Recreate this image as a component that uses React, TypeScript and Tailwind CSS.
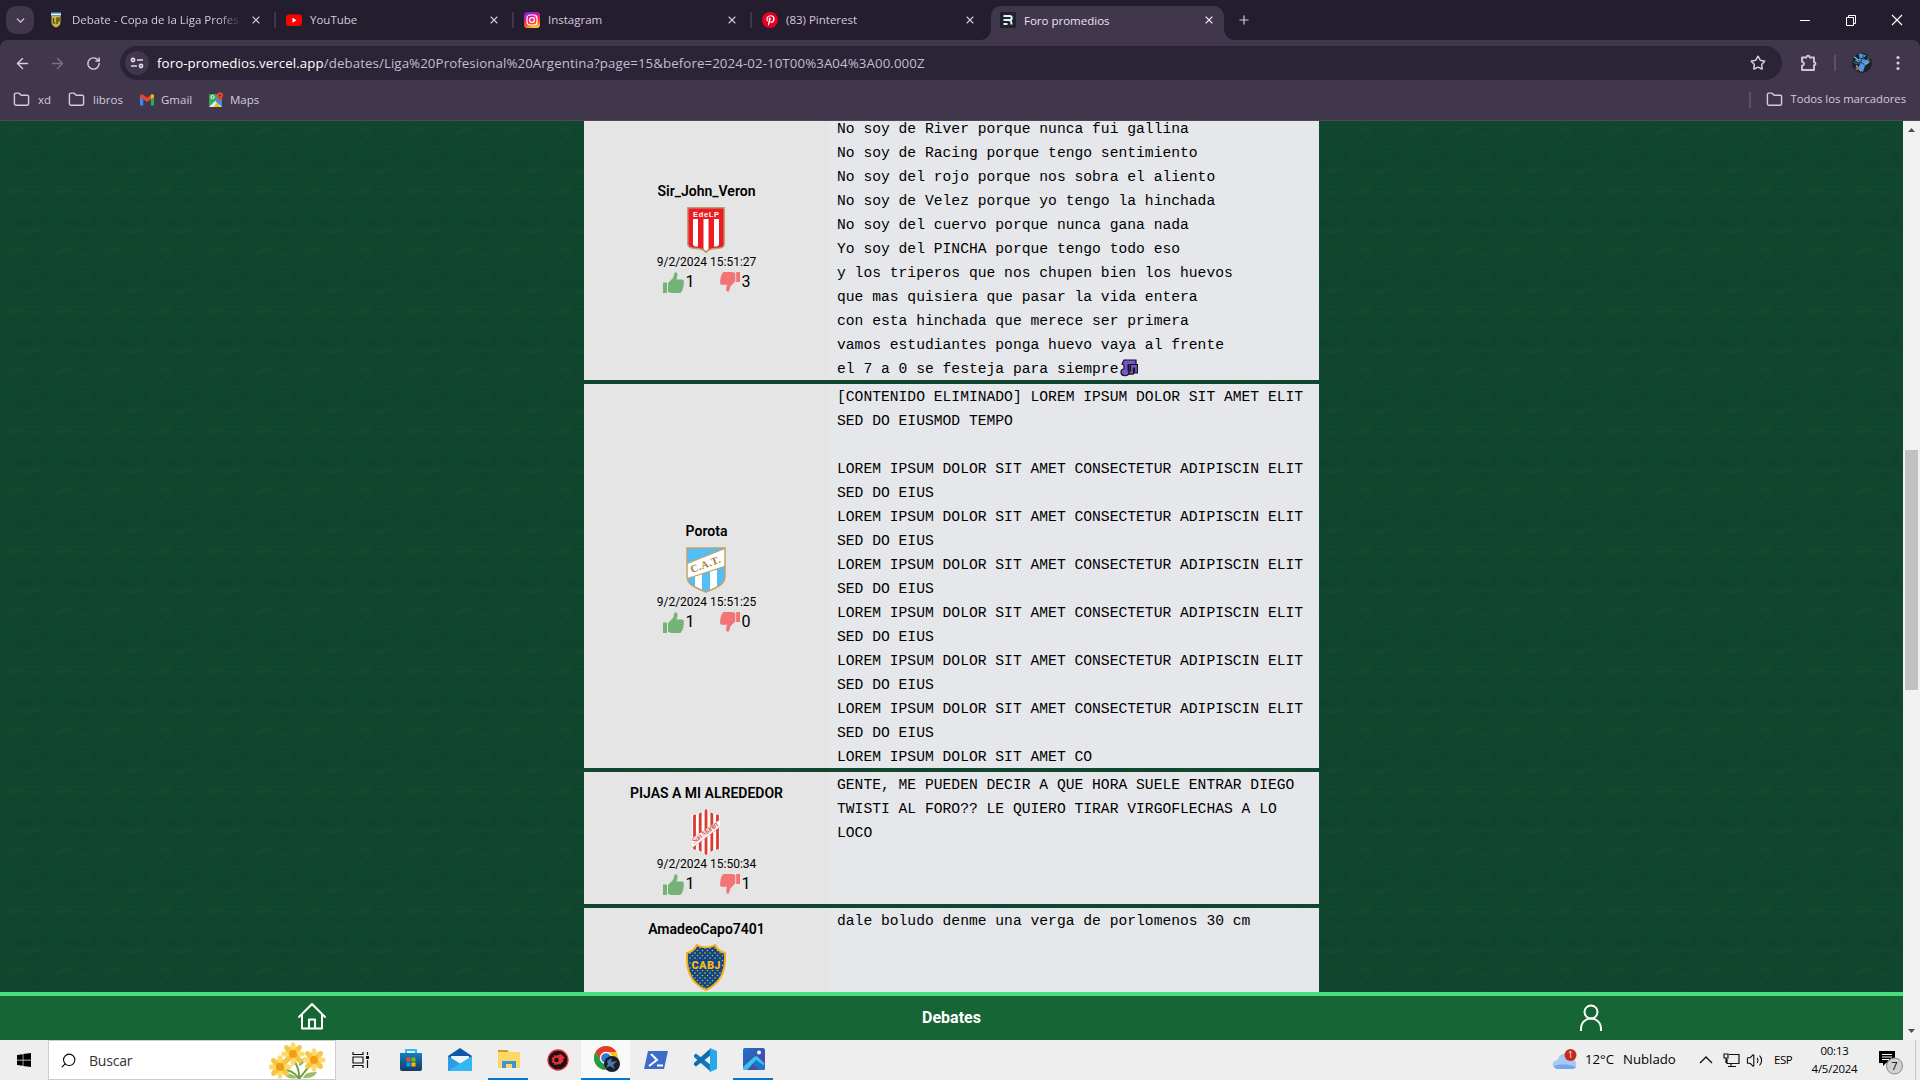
import React from "react";
import { ArrowLeft, ArrowRight, ChevronDown, Folder, Plus, RotateCw, Search, Star, X, Volume2 } from "lucide-react";
import { FaPinterestP, FaWindows } from "react-icons/fa";

type Kids = { children?: React.ReactNode };

function LeagueIcon() {
  return (
    <svg viewBox="0 0 16 16" className="size-4 shrink-0">
      <path d="M3.500 4h9v6.500c0 2.500-2 4-4.500 5-2.500-1-4.500-2.500-4.500-5z" fill="#d6b23c" />
      <path d="M3 .5h10v1.500H3z" fill="#46c3ea" />
      <path d="M3 2h10v1.500H3z" fill="#f4f8fa" />
      <path d="M5.500 6v5h2M9 12V6h2v3H9" stroke="#23483c" strokeWidth="1.200" fill="none" />
    </svg>
  );
}

function YoutubeIcon() {
  return (
    <svg viewBox="0 0 16 16" className="size-4 shrink-0">
      <rect y="2.500" width="16" height="11.500" rx="3" fill="#ff0000" />
      <path d="M6.500 5.800v4.900l4-2.450z" fill="#fff" />
    </svg>
  );
}

function InstagramIcon() {
  return (
    <svg viewBox="0 0 16 16" className="size-4 shrink-0">
      <defs>
        <linearGradient id="ig" x1="0.2" y1="0" x2="0.5" y2="1">
          <stop offset="0" stopColor="#7b20ee" />
          <stop offset=".45" stopColor="#f0127a" />
          <stop offset=".75" stopColor="#ff4b2b" />
          <stop offset="1" stopColor="#ffc928" />
        </linearGradient>
      </defs>
      <rect width="16" height="16" rx="3.500" fill="url(#ig)" />
      <rect x="3" y="3" width="10" height="10" rx="3" fill="none" stroke="#fff" strokeWidth="1.200" />
      <circle cx="8" cy="8" r="2.400" fill="none" stroke="#fff" strokeWidth="1.200" />
      <circle cx="11" cy="5" r=".7" fill="#fff" />
    </svg>
  );
}

function PinterestIcon() {
  return (
    <span className="flex size-4 shrink-0 items-center justify-center rounded-full bg-[#e60023] text-white">
      <FaPinterestP size={11} />
    </span>
  );
}

function RemixIcon() {
  return (
    <svg viewBox="0 0 16 16" className="size-4 shrink-0">
      <rect width="16" height="16" rx="1.500" fill="#20242a" />
      <path d="M3.500 4h6.200c2.700 0 2.700 4 0 4H3.500M9 8.200c2 0 2.500 1 2.500 4.300M3.500 12h4" fill="none" stroke="#e6f0ff" strokeWidth="2" />
    </svg>
  );
}

const tabs = [
  { title: "Debate - Copa de la Liga Profes", icon: <LeagueIcon /> },
  { title: "YouTube", icon: <YoutubeIcon /> },
  { title: "Instagram", icon: <InstagramIcon /> },
  { title: "(83) Pinterest", icon: <PinterestIcon /> },
];

function TabBar() {
  return (
    <div className="flex h-10 items-start pt-1.5 text-[11.500px] text-[#d5cadf]">
      <div className="ml-1.5 mr-1 flex size-7 items-center justify-center rounded-[10px] bg-[#40374c]">
        <ChevronDown size={13} strokeWidth={2.5} />
      </div>
      {tabs.map((t, i) => (
        <div key={t.title} className="flex h-7 w-[238px] items-center">
          <div className="flex min-w-0 flex-1 items-center gap-2 pl-2.5 pr-3">
            {t.icon}
            <span className={i === 0 ? "flex-1 whitespace-nowrap [mask-image:linear-gradient(to_right,black_86%,transparent)]" : "flex-1 whitespace-nowrap"}>{t.title}</span>
            <X size={12} strokeWidth={2.200} className="shrink-0" />
          </div>
          <div className={i < 3 ? "h-4 w-0.5 rounded bg-[#40374c]" : "h-4 w-0.5"} />
        </div>
      ))}
      <div className="-ml-[9px] flex h-[34px] items-end">
        <div className="size-2.5 bg-[radial-gradient(circle_at_0_0,transparent_9.500px,#40374c_10px)]" />
        <div className="flex h-[34px] w-[233px] items-start gap-2 rounded-t-[10px] bg-[#40374c] pl-[9px] pr-[9px] pt-1.5 text-[#ece4f2]">
          <RemixIcon />
          <span className="flex-1">Foro promedios</span>
          <X size={12} strokeWidth={2.200} className="mt-0.5" />
        </div>
        <div className="size-2.5 bg-[radial-gradient(circle_at_100%_0,transparent_9.500px,#40374c_10px)]" />
      </div>
      <Plus size={14} className="ml-[3px] mt-[7px]" />
      <div className="ml-auto flex items-center pt-2 text-white">
        <svg viewBox="0 0 12 12" className="mr-[34px] size-3"><path d="M1 6.500h10" stroke="#fff" /></svg>
        <svg viewBox="0 0 12 12" className="mr-[34px] size-3"><path d="M1.500 3.500h7v8h-7zM3.500 3.500v-2h7v8h-2" stroke="#fff" fill="none" /></svg>
        <svg viewBox="0 0 12 12" className="mr-[17px] size-3"><path d="M1 1l10 10M11 1L1 11" stroke="#fff" strokeWidth="1.200" /></svg>
      </div>
    </div>
  );
}

function Puzzle() {
  return (
    <svg viewBox="0 0 20 20" className="size-5 text-[#cfc2da]">
      <path d="M3 4.500h4.300a1.700 1.700 0 013.400 0H15v4.800a1.500 1.500 0 010 3V17H3v-4.200c2.700-.6 2.700-3.500 0-4z" fill="none" stroke="currentColor" strokeWidth="1.900" strokeLinejoin="round" />
    </svg>
  );
}

function Avatar() {
  return (
    <svg viewBox="0 0 24 24" className="size-full">
      <defs><clipPath id="av"><circle cx="12" cy="12" r="12" /></clipPath></defs>
      <g clipPath="url(#av)">
        <path d="M0 0h24v24H0z" fill="#17232a" />
        <path d="M8 0l9 3-4 4 8 1-5 6-3 9-5-6 2-5-7-3 6-2z" fill="#5b94dc" />
        <path d="M2 4l5 4M16 14l5-4M5 15l6 7" stroke="#91b9e7" strokeWidth="1.500" />
        <path d="M9 6l9 2M8 9l7 5M14 3l-4 9" stroke="#1f3a5c" strokeWidth="1.200" />
        <circle cx="6" cy="19" r="2" fill="#a7582f" />
        <path d="M20 2v8M2 11l6 2" stroke="#34604b" strokeWidth="2" />
      </g>
    </svg>
  );
}

function Toolbar() {
  return (
    <div className="flex h-[46px] items-center rounded-t-lg bg-[#40374c] text-[#d8cce2]">
      <ArrowLeft size={17} strokeWidth={2} className="ml-[14px]" />
      <ArrowRight size={17} strokeWidth={2} className="ml-[18px] text-[#7b7186]" />
      <RotateCw size={15} strokeWidth={2.300} className="ml-5" />
      <div className="ml-[19px] flex h-[34px] w-[1662px] items-center rounded-full bg-[#2b2436] pl-[5px] pr-4">
        <div className="flex size-6 items-center justify-center rounded-full bg-[#40374c]">
          <svg viewBox="0 0 14 14" className="size-3.5" fill="none" stroke="#e3d9eb" strokeWidth="1.600">
            <circle cx="3" cy="4" r="1.600" /><path d="M7 4h6M1 10h6" /><circle cx="11" cy="10" r="1.600" />
          </svg>
        </div>
        <span className="ml-2 flex-1 whitespace-nowrap pt-px text-[13.300px] tracking-[0.080px] text-[#c6bcd0]">
          <span className="text-white">foro-promedios.vercel.app</span>/debates/Liga%20Profesional%20Argentina?page=15&amp;before=2024-02-10T00%3A04%3A00.000Z
        </span>
        <Star size={16} strokeWidth={2.200} />
      </div>
      <div className="ml-[17px]"><Puzzle /></div>
      <div className="ml-[15px] h-4 w-0.5 bg-[#5a5068]" />
      <div className="ml-[16px] size-5"><Avatar /></div>
      <svg viewBox="0 0 4 16" className="ml-6 h-4 w-1" fill="#d8cce2"><circle cx="2" cy="2.500" r="1.600" /><circle cx="2" cy="8" r="1.600" /><circle cx="2" cy="13.500" r="1.600" /></svg>
    </div>
  );
}

function Bookmarks() {
  return (
    <div className="flex h-[35px] items-center border-b border-[#51474f] bg-[#40374c] pb-[7px] text-[11.500px] text-[#d5cadf]">
      <Folder size={17} strokeWidth={2} className="ml-[13px]" />
      <span className="ml-2 w-[30px]">xd</span>
      <Folder size={17} strokeWidth={2} />
      <span className="ml-2 w-[47px]">libros</span>
      <svg viewBox="0 0 14 12" className="h-3 w-[14px]">
        <path d="M0 2v9.500h3.200V5z" fill="#4285f4" /><path d="M14 2v9.500h-3.200V5z" fill="#34a853" />
        <path d="M0 2C0 0 2-.2 3.200.8L7 3.800l3.800-3v4.400L7 8 0 3z" fill="#ea4335" />
        <path d="M10.800.8C12-.2 14 0 14 2v1l-3.200 2.300z" fill="#fbbc04" />
      </svg>
      <span className="ml-[7px] w-[47px]">Gmail</span>
      <svg viewBox="0 0 15 16" className="ml-px h-4 w-[15px]">
        <path d="M0 2h13v13H0z" fill="#34a853" /><path d="M0 15L8 7l5 8z" fill="#e8eaed" /><path d="M6 9l3-3 4 5v4z" fill="#4285f4" /><path d="M5 15l3-5 3 5z" fill="#fbbc04" />
        <circle cx="3.500" cy="5" r="1.600" stroke="#fff" fill="none" />
        <path d="M11 9C8 5 7.500 4 8 2.300a3.300 3.300 0 016 0C14.500 4 14 5 11 9z" fill="#ea4335" /><circle cx="11" cy="3.500" r="1" fill="#851b13" />
      </svg>
      <span className="ml-[6px]">Maps</span>
      <div className="ml-auto h-4 w-0.5 bg-[#5a5068]" />
      <Folder size={17} strokeWidth={2} className="ml-[15px]" />
      <span className="ml-[7px] mr-3.5 whitespace-nowrap text-[11.300px] tracking-[-0.030px]">Todos los marcadores</span>
    </div>
  );
}

function EstudiantesCrest() {
  return (
    <svg viewBox="0 0 38 46" className="h-[46px] w-[38px]">
      <path d="M.8.8h36.400v36.500c0 2.500-3 4.200-8 4.200-5 0-8 1-10.200 4-2.200-3-5.200-4-10.200-4-5 0-8-1.700-8-4.200z" fill="#ed1c24" stroke="#b5a170" strokeWidth="1.400" />
      <path d="M6 12h5v27.500H8L6 38zM16.500 12h5v30L19 44l-2.500-2zM27 12h5v26l-2 1.500h-3z" fill="#fff" />
      <text x="19" y="9.500" textAnchor="middle" fontSize="7.500" fontWeight="700" fill="#fff" fontFamily="Liberation Sans, sans-serif" textLength="26">EdeLP</text>
    </svg>
  );
}

function TucumanCrest() {
  return (
    <svg viewBox="0 0 40 46" className="h-[46px] w-10">
      <defs><clipPath id="cat"><path d="M1 1h38v28c0 9-9 12-19 16C10 41 1 38 1 29z" /></clipPath></defs>
      <g clipPath="url(#cat)">
        <path d="M0 0h40v46H0z" fill="#55bdf5" />
        <path d="M9 26h7v20H9zM24 23h7v23h-7z" fill="#fff" />
        <path d="M0 17L40 1v18L0 32z" fill="#fff" stroke="#c3a468" strokeWidth="1.200" />
      </g>
      <path d="M1 1h38v28c0 9-9 12-19 16C10 41 1 38 1 29z" fill="none" stroke="#bea36d" strokeWidth="1.500" />
      <text transform="translate(6 26) rotate(-20)" fontSize="10.500" fontWeight="700" fill="#a67c35" fontFamily="Liberation Serif, serif" textLength="31">C.A.T.</text>
    </svg>
  );
}

function SanMartinCrest() {
  return (
    <svg viewBox="0 0 32 46" className="h-[46px] w-8">
      <defs><clipPath id="sm"><path d="M16 0c4 4 9 6 15 6-2 5-1 8-1 16s-1 14 1 18c-6 0-11 2-15 6-4-4-9-6-15-6 2-4 1-10 1-18S3 11 1 6c6 0 11-2 15-6z" /></clipPath></defs>
      <g clipPath="url(#sm)">
        <path d="M0 0h32v46H0z" fill="#fff" />
        <path d="M4.500 0v46M10.200 0v46M16 0v46M21.800 0v46M27.500 0v46" stroke="#dc3a30" strokeWidth="2.800" />
        <path d="M0 31L31 10v7L2 39z" fill="#fff" stroke="#dfa49e" strokeWidth=".8" />
        <text transform="translate(4 35) rotate(-37)" fontSize="8" fontStyle="italic" fontWeight="700" fill="#d9655c" fontFamily="Liberation Serif, serif" textLength="31">San Martín</text>
      </g>
    </svg>
  );
}

function BocaCrest() {
  const shield = "M1 9c5-1 8-4 10-8 4 3 14 3 18 0 2 4 5 7 10 8 1 18-4 30-19 37C5 39 0 27 1 9z";
  return (
    <svg viewBox="0 0 40 47" className="h-[47px] w-10">
      <defs><pattern id="dots" width="5" height="5" patternUnits="userSpaceOnUse"><circle cx="1.500" cy="1.500" r=".8" fill="#e0b73c" /><circle cx="4" cy="4" r=".8" fill="#e0b73c" /></pattern></defs>
      <path d={shield} fill="#0c4688" />
      <path d={shield} fill="url(#dots)" stroke="#f6b018" strokeWidth="2" />
      <path d="M5 16h30v10H5z" fill="#0c4688" />
      <text x="20" y="25" textAnchor="middle" fontSize="11" fontWeight="900" fill="#fdb913" fontFamily="Roboto, sans-serif" textLength="29">CABJ</text>
    </svg>
  );
}

function MusicEmoji() {
  return (
    <svg viewBox="0 0 18 18" className="ml-0.5 inline size-[18px] align-[-4px]">
      <path d="M4 1h12v5h-3l-1 9H9v-2c0 5-8 5-8 0 0-2 1-3 3-3V6L2 5z" fill="#7557c9" stroke="#15111d" strokeWidth="1.200" />
      <path d="M10.500 12V5.500h7v8.500h-3v-5h-1v6H9v-3z" fill="#7557c9" stroke="#15111d" strokeWidth="1.200" />
      <path d="M8.500 5v7" stroke="#15111d" strokeWidth="2" />
    </svg>
  );
}

function Thumb({ down }: { down?: boolean }) {
  return (
    <svg viewBox="0 0 21 21" className={down ? "size-5 shrink-0 rotate-180 text-[#f27474]" : "size-[21px] shrink-0 text-[#74b276]"} fill="currentColor">
      <path d="M0 10.500h4V21H0zM5 11l5-5 1.500-5c.5-1.500 3-1 3 1.500 0 2-.5 3.500-1 5H19c2 0 2.400 2 1.500 3.200.8 1 .6 2.200-.3 3 .6 1 .3 2.200-.6 2.800.4 1.200-.1 2.300-1.100 2.700 0 1.200-.8 1.800-2 1.800H10c-2 0-3.500-.5-5-1z" />
    </svg>
  );
}

type PostProps = Kids & { user: string; date?: string; up?: number; down?: number; crest: React.ReactNode };

function Post({ user, date, up, down, crest, children }: PostProps) {
  return (
    <article className="flex min-h-[132px] w-[735px] shrink-0 text-black">
      <div className="flex w-[245px] flex-col items-center justify-center bg-[#e5e5e5] font-[Roboto,sans-serif]">
        <h3 className="h-6 pt-px text-sm/6 font-[600]">{user}</h3>
        <div className="flex h-[52px] items-center pr-px pt-[3px]">{crest}</div>
        <time className="h-4 text-xs/4">{date}</time>
        <div className="flex h-6 items-center gap-[26px] text-base/6">
          <span className="flex w-[31px] items-center gap-0.5"><Thumb />{up}</span>
          <span className="flex w-[31px] items-center gap-0.5"><Thumb down />{down}</span>
        </div>
      </div>
      <p className="flex-1 whitespace-pre-wrap bg-gray-200 px-2 font-['Liberation_Mono',monospace] text-[14.660px]/6">
        <span className="block translate-y-px">{children}</span>
      </p>
    </article>
  );
}

const chant = `
No soy de River porque nunca fui gallina
No soy de Racing porque tengo sentimiento
No soy del rojo porque nos sobra el aliento
No soy de Velez porque yo tengo la hinchada
No soy del cuervo porque nunca gana nada
Yo soy del PINCHA porque tengo todo eso
y los triperos que nos chupen bien los huevos
que mas quisiera que pasar la vida entera
con esta hinchada que merece ser primera
vamos estudiantes ponga huevo vaya al frente
el 7 a 0 se festeja para siempre`;

const filler = [
  "[CONTENIDO ELIMINADO] LOREM IPSUM DOLOR SIT AMET ELIT\nSED DO EIUSMOD TEMPO\n",
  ...Array.from({ length: 6 }, () => "LOREM IPSUM DOLOR SIT AMET CONSECTETUR ADIPISCIN ELIT\nSED DO EIUS"),
  "LOREM IPSUM DOLOR SIT AMET CO",
].join("\n");

function Felt() {
  return (
    <svg className="absolute inset-0 size-full">
      <defs>
        <filter id="soft" x="-10%" y="-10%" width="120%" height="120%"><feGaussianBlur stdDeviation="1.500" /></filter>
        <pattern id="felt" width="50" height="60" patternUnits="userSpaceOnUse">
          <rect width="50" height="60" fill="#10462f" />
          <g filter="url(#soft)" fill="none">
            <path d="M4 14q8-5 18-4M12 23l4-7M31 11l8 4M26 52q8-4 18-3" stroke="#1c4c2f" strokeWidth="2" opacity=".7" />
            <path d="M10 18l7 3M34 19l6-4M14 42q8 2 17 0M30 55l9-1M44 32l2 10" stroke="#163b30" strokeWidth="3" opacity=".7" />
            <path d="M5 33h14M29 26h14M6 6h36" stroke="#0b4a2b" strokeWidth="2.500" opacity=".7" />
          </g>
        </pattern>
      </defs>
      <rect width="100%" height="100%" fill="url(#felt)" />
    </svg>
  );
}

function Forum() {
  return (
    <div className="flex h-[919px]">
      <div className="flex w-[1903px] flex-col">
        <main className="relative h-[871px] overflow-hidden">
          <Felt />
          <div className="relative -mt-[29px] ml-[584px] flex flex-col gap-1">
            <Post user="Sir_John_Veron" date="9/2/2024 15:51:27" up={1} down={3} crest={<EstudiantesCrest />}>{chant}<MusicEmoji /></Post>
            <Post user="Porota" date="9/2/2024 15:51:25" up={1} down={0} crest={<TucumanCrest />}>{filler}</Post>
            <Post user="PIJAS A MI ALREDEDOR" date="9/2/2024 15:50:34" up={1} down={1} crest={<SanMartinCrest />}>{"GENTE, ME PUEDEN DECIR A QUE HORA SUELE ENTRAR DIEGO TWISTI AL FORO?? LE QUIERO TIRAR VIRGOFLECHAS A LO LOCO"}</Post>
            <Post user="AmadeoCapo7401" crest={<BocaCrest />}>dale boludo denme una verga de porlomenos 30 cm</Post>
          </div>
        </main>
        <nav className="relative flex h-12 items-center justify-around border-t-4 border-[#4ade80] bg-[#166534] font-[Roboto,sans-serif] text-base font-bold text-white">
          <svg viewBox="0 0 28 28" className="size-7 -translate-y-0.5" fill="none" stroke="#fff" strokeWidth="2" strokeLinecap="round" strokeLinejoin="round"><path d="M1 15L14 2l13 13M4 13v13.500h20V13M11 26v-8.500h6V26" /></svg>
          <span>Debates</span>
          <svg viewBox="0 0 28 28" className="size-7" fill="none" stroke="#fff" strokeWidth="2"><circle cx="14" cy="8" r="6.500" /><path d="M4 27v-2c0-14 20-14 20 0v2" /></svg>
        </nav>
      </div>
      <div className="flex w-[17px] flex-col items-center bg-[#f1f1f1] py-[7px]">
        <svg viewBox="0 0 7 4" className="h-1 w-[7px]"><path d="M0 4l3.500-4L7 4z" fill="#505050" /></svg>
        <div className="mt-[318px] h-60 w-[13px] bg-[#c1c1c1]" />
        <svg viewBox="0 0 7 4" className="mt-auto h-1 w-[7px]"><path d="M0 0l3.500 4L7 0z" fill="#505050" /></svg>
      </div>
    </div>
  );
}

function Flowers() {
  const blooms = [[24, 13, 12], [11, 26, 12], [45, 19, 12]];
  return (
    <svg viewBox="0 0 58 38" className="h-[38px] w-[58px]">
      <path d="M24 18q7 10 6 20M46 20q-9 8-16 18M12 28q13 1 18 10" stroke="#71a044" strokeWidth="2" fill="none" />
      <path d="M15 33q7-2 13 4-9 2-13-4M34 37q2-7 14-6-3 7-14 6M30 25q-1-6 6-9 0 8-6 9" fill="#9abd66" />
      {blooms.map(([x, y, r]) => (
        <g key={x} transform={`translate(${x} ${y})`}>
          {[0, 45, 90, 135, 180, 225, 270, 315].map((a) => (
            <ellipse key={a} cx="0" cy={-r * 0.56} rx="2.700" ry={r * 0.42} transform={`rotate(${a})`} fill={a % 90 ? "#f6c545" : "#ffd969"} />
          ))}
          <circle r="4" fill="#f29d13" />
        </g>
      ))}
    </svg>
  );
}

function TaskSlot({ open, active, children }: Kids & { open?: boolean; active?: boolean }) {
  return (
    <div className={active ? "flex h-10 w-[49px] flex-col items-center bg-[#f9f9f9]" : "flex h-10 w-[49px] flex-col items-center"}>
      <div className="flex flex-1 items-center justify-center pl-0.5">{children}</div>
      {active ? <div className="h-0.5 w-full bg-[#0078d7]" /> : open ? <div className="h-0.5 w-10 bg-[#0078d7]" /> : null}
    </div>
  );
}

function Taskbar() {
  return (
    <footer className="flex h-10 items-center bg-[#eeeeee] text-black">
      <div className="flex w-12 justify-center"><FaWindows size={16} /></div>
      <div className="flex h-10 w-[288px] items-center border border-[#cccccc] bg-white pl-[11px] pr-2">
        <Search size={17} strokeWidth={1.500} className="-scale-x-100" />
        <span className="ml-3 flex-1 text-[14px] tracking-[-0.200px] text-[#333]">Buscar</span>
        <Flowers />
      </div>
      <TaskSlot>
        <svg viewBox="0 0 18 16" className="mr-0.5 h-4 w-[18px]" fill="none" stroke="#111" strokeWidth="1.200"><path d="M1 0v2.500h10V0M1 16v-2.500h10V16M1 5h10v6H1zM15.500 0v3M15.500 8v8" /><path d="M14 4h3v3h-3z" fill="#111" stroke="none" /></svg>
      </TaskSlot>
      <TaskSlot>
        <svg viewBox="0 0 24 24" className="size-6">
          <defs><linearGradient id="store" x2="0" y2="1"><stop stopColor="#1280c6" /><stop offset="1" stopColor="#193863" /></linearGradient></defs>
          <path d="M7 6V2h10v4" fill="none" stroke="#2cbdf3" strokeWidth="2" /><path d="M1 5h22v16a2 2 0 01-2 2H3a2 2 0 01-2-2z" fill="url(#store)" />
          <path d="M7.500 9.500h4v4h-4z" fill="#f25022" /><path d="M12.500 9.500h4v4h-4z" fill="#7fba00" /><path d="M7.500 14.500h4v4h-4z" fill="#00a4ef" /><path d="M12.500 14.500h4v4h-4z" fill="#ffb900" />
        </svg>
      </TaskSlot>
      <TaskSlot>
        <svg viewBox="0 0 24 24" className="size-6"><path d="M0 8l12-8 12 8v4H0z" fill="#0a58a8" /><path d="M3 8h18v5l-9 6-9-6z" fill="#eef5fa" /><path d="M0 8l24 15H0z" fill="#2a9ce8" /><path d="M24 8v15H0z" fill="#35b8f1" /></svg>
      </TaskSlot>
      <TaskSlot open>
        <svg viewBox="0 0 22 20" className="h-5 w-[22px]"><path d="M0 1h9l2 2H0z" fill="#d79a13" /><path d="M0 3h22v16H0z" fill="#ffd766" /><path d="M4 19v-7h14v7h-4v-4H8v4z" fill="#3796d5" /></svg>
      </TaskSlot>
      <TaskSlot>
        <svg viewBox="0 0 22 22" className="size-[22px]"><circle cx="11" cy="11" r="10" fill="#171315" stroke="#e92c37" strokeWidth="1.300" /><circle cx="9.500" cy="11" r="4" fill="none" stroke="#ed3038" strokeWidth="2" strokeDasharray="2.200 .94" /><circle cx="9.500" cy="11" r="3" fill="none" stroke="#ed3038" strokeWidth="1.500" /><path d="M11 6l3-1 4 4-2 1 .5 2-3.500 3.500-1-2 1.500-4z" fill="#ed3038" /></svg>
      </TaskSlot>
      <TaskSlot active>
        <svg viewBox="0 0 26 26" className="size-[26px]">
          <circle cx="12" cy="12" r="12" fill="#fbc21b" /><path d="M1.600 6a12 12 0 0120.800 0H12a6 6 0 00-5.200 9z" fill="#e33b2e" /><path d="M1.600 6l5.200 9A6 6 0 0012 18l-1 6A12 12 0 011.600 6z" fill="#229c4b" />
          <circle cx="12" cy="12" r="5.500" fill="#3577dd" stroke="#fff" strokeWidth="1.300" />
          <circle cx="18" cy="18" r="8" fill="#17202a" /><path d="M13 15l5-3-1 4 6-1-4 4 2 4-5-3-4 2 2-4z" fill="#5377a8" />
        </svg>
      </TaskSlot>
      <TaskSlot>
        <svg viewBox="0 0 24 18" className="h-[18px] w-6"><path d="M4 0h20l-4 18H0z" fill="#3c6cc8" /><path d="M7 3l6 6-8 6M13 14.500h6" fill="none" stroke="#fff" strokeWidth="2" /></svg>
      </TaskSlot>
      <TaskSlot>
        <svg viewBox="0 0 24 24" className="size-6"><path d="M1 7l2-1.500L18 17v7L1 9z" fill="#1279bd" /><path d="M1 17l2 1.500L18 7V0L1 15z" fill="#0f6cae" /><path d="M17 0l7 3v18l-7 3z" fill="#29a8ee" /></svg>
      </TaskSlot>
      <TaskSlot open>
        <svg viewBox="0 0 22 22" className="size-[22px]"><defs><linearGradient id="ph" x2="1" y2="1"><stop stopColor="#1874c9" /><stop offset="1" stopColor="#5c3ba0" /></linearGradient></defs><rect width="22" height="22" rx="2" fill="url(#ph)" /><path d="M13 8l9 9v3a2 2 0 01-2 2h-4L8 14z" fill="#1c75c9" /><path d="M0 19L11 9q2-1.500 4 0l7 7-2 1-7-5L4 22H2q-2 0-2-2z" fill="#39c2ed" /><circle cx="16" cy="4.500" r="2" fill="#fff" /></svg>
      </TaskSlot>
      <div className="ml-auto flex h-full items-center whitespace-nowrap text-[13.200px]">
        <svg viewBox="0 0 26 22" className="h-[22px] w-[26px]">
          <path d="M6 20C-1 20-1 11 6 11c1-8 12-8 13-1 7 0 7 10 0 10z" fill="#a9c9f4" /><path d="M2 17q10-4 22 1-1 2-5 2H6q-3 0-4-3" fill="#78a5e7" />
          <circle cx="18.500" cy="6" r="6" fill="#c42b1c" /><text x="18.500" y="9" fontSize="8.500" fill="#fff" textAnchor="middle" fontFamily="Open Sans, sans-serif">1</text>
        </svg>
        <span className="ml-[7px] w-[38px]">12°C</span>
        <span className="w-[76px]">Nublado</span>
        <svg viewBox="0 0 14 8" className="h-2 w-3.5" fill="none" stroke="#111" strokeWidth="1.400"><path d="M1 7l6-6 6 6" /></svg>
        <svg viewBox="0 0 17 14" className="ml-2.5 h-3.5 w-[17px]" fill="none" stroke="#111" strokeWidth="1.200"><path d="M6 1.500h10v9H4V6M8 10.500v3M5 13.500h8M1 1h4v4H1zM3 5v5" /></svg>
        <Volume2 size={17} strokeWidth={1.500} className="ml-[6px]" />
        <span className="ml-[11px] w-[37px] text-[11.400px] tracking-[-0.400px]">ESP</span>
        <div className="flex w-[47px] flex-col items-center text-[11.400px]/[18px] tracking-[-0.200px]"><span>00:13</span><span>4/5/2024</span></div>
        <svg viewBox="0 0 26 26" className="ml-5 mt-1.5 size-[26px]">
          <path d="M1 1h16v12H8l-3 3v-3H1z" fill="#000" /><path d="M4 4.500h10M4 7h10M4 9.500h7" stroke="#fff" />
          <circle cx="16.500" cy="16" r="8" fill="#d1d1d1" stroke="#888" /><text x="16.500" y="20" textAnchor="middle" fontSize="11" fontFamily="Open Sans, sans-serif">7</text>
        </svg>
        <div className="ml-[11px] mr-1 h-full w-px bg-[#c3c3c3]" />
      </div>
    </footer>
  );
}

export default function App() {
  return (
    <div className="flex h-[1080px] w-[1920px] flex-col overflow-hidden bg-[#241d2e] font-['Open_Sans',sans-serif]">
      <TabBar />
      <Toolbar />
      <Bookmarks />
      <Forum />
      <Taskbar />
    </div>
  );
}
